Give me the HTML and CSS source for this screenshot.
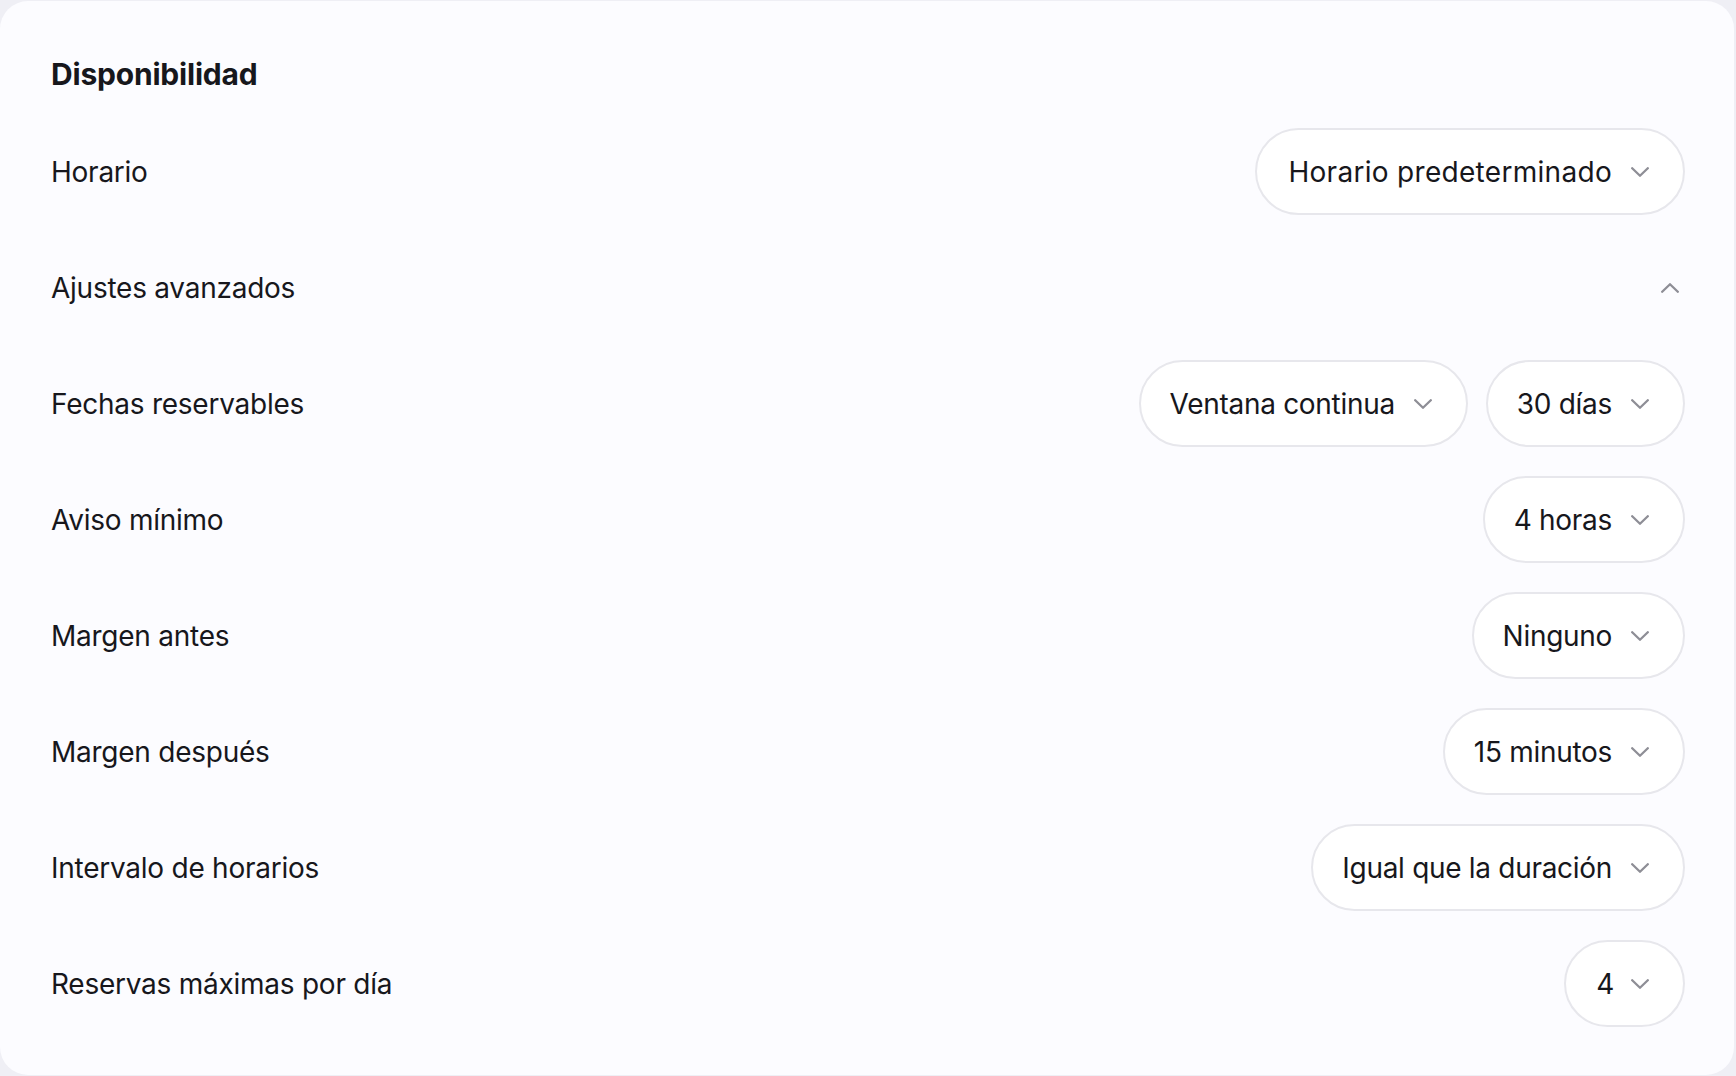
FILE: index.html
```html
<!DOCTYPE html>
<html lang="es">
<head>
<meta charset="utf-8">
<title>Disponibilidad</title>
<link rel="stylesheet" href="styles.css">
</head>
<body>
<section class="card">
  <h2 class="title">Disponibilidad</h2>
  <div class="rows">
    <div class="row">
      <span class="label">Horario</span>
      <div class="controls">
        <button class="pill pill-loose"><span>Horario predeterminado</span><svg class="chev" viewBox="0 0 18 10"><polyline points="1.2,1.2 9,8.8 16.8,1.2"/></svg></button>
      </div>
    </div>
    <div class="row">
      <span class="label">Ajustes avanzados</span>
      <div class="controls">
        <svg class="chev up" viewBox="0 0 18 10"><polyline points="1.2,8.8 9,1.2 16.8,8.8"/></svg>
      </div>
    </div>
    <div class="row">
      <span class="label">Fechas reservables</span>
      <div class="controls">
        <button class="pill"><span>Ventana continua</span><svg class="chev" viewBox="0 0 18 10"><polyline points="1.2,1.2 9,8.8 16.8,1.2"/></svg></button>
        <button class="pill"><span>30 días</span><svg class="chev" viewBox="0 0 18 10"><polyline points="1.2,1.2 9,8.8 16.8,1.2"/></svg></button>
      </div>
    </div>
    <div class="row">
      <span class="label">Aviso mínimo</span>
      <div class="controls">
        <button class="pill"><span>4 horas</span><svg class="chev" viewBox="0 0 18 10"><polyline points="1.2,1.2 9,8.8 16.8,1.2"/></svg></button>
      </div>
    </div>
    <div class="row">
      <span class="label">Margen antes</span>
      <div class="controls">
        <button class="pill"><span>Ninguno</span><svg class="chev" viewBox="0 0 18 10"><polyline points="1.2,1.2 9,8.8 16.8,1.2"/></svg></button>
      </div>
    </div>
    <div class="row">
      <span class="label">Margen después</span>
      <div class="controls">
        <button class="pill"><span>15 minutos</span><svg class="chev" viewBox="0 0 18 10"><polyline points="1.2,1.2 9,8.8 16.8,1.2"/></svg></button>
      </div>
    </div>
    <div class="row">
      <span class="label">Intervalo de horarios</span>
      <div class="controls">
        <button class="pill"><span>Igual que la duración</span><svg class="chev" viewBox="0 0 18 10"><polyline points="1.2,1.2 9,8.8 16.8,1.2"/></svg></button>
      </div>
    </div>
    <div class="row">
      <span class="label">Reservas máximas por día</span>
      <div class="controls">
        <button class="pill pill-num"><span>4</span><svg class="chev" viewBox="0 0 18 10"><polyline points="1.2,1.2 9,8.8 16.8,1.2"/></svg></button>
      </div>
    </div>
  </div>
</section>
</body>
</html>
```
FILE: styles.css
```css
* { box-sizing: border-box; }
html, body { height: 100%; }
body {
  margin: 0;
  padding: 1px 2px 1px 0;
  background: #efeff5;
  font-family: Inter, "Noto Sans", sans-serif;
  color: #17171c;
}
.card {
  height: 100%;
  background: #fcfcff;
  border-radius: 28px;
  padding: 55px 49px 0 51px;
}
.title {
  margin: 0 0 36px;
  font-size: 30px;
  line-height: 36px;
  font-weight: 700;
  letter-spacing: -0.2px;
}
.rows {
  display: flex;
  flex-direction: column;
  gap: 29px;
}
.row {
  display: flex;
  align-items: center;
  justify-content: space-between;
  min-height: 87px;
}
.label {
  font-size: 28px;
  letter-spacing: -0.25px;
}
.controls {
  display: flex;
  align-items: center;
  gap: 18px;
}
.pill {
  display: inline-flex;
  align-items: center;
  gap: 19px;
  height: 87px;
  padding: 0 34px 0 29px;
  background: #ffffff;
  border: 2px solid #e7e7ec;
  border-radius: 44px;
  font-family: inherit;
  font-size: 28px;
  letter-spacing: -0.3px;
  color: #17171c;
}
.pill-loose {
  letter-spacing: 0.3px;
  padding-left: 31px;
}
.pill-num {
  padding-left: 30px;
  gap: 17px;
}
.chev {
  width: 18px;
  height: 10px;
  fill: none;
  stroke: #8e8e96;
  stroke-width: 2.3;
  stroke-linecap: round;
  stroke-linejoin: round;
}
.chev.up {
  margin-right: 6px;
}
```
